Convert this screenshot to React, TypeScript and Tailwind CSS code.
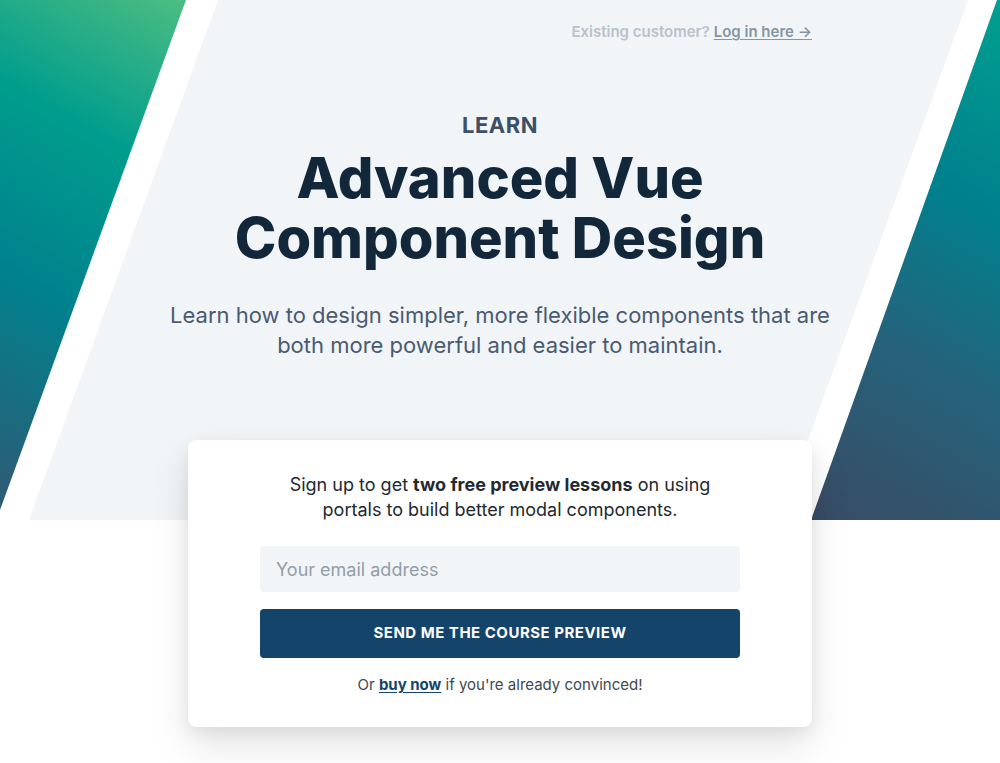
export default function App() {
  return (
    <div className="relative min-h-[763px] bg-white font-['Inter',sans-serif] overflow-hidden">
      {/* background shapes */}
      <div className="absolute top-0 left-0 w-[186px] h-[510px] [clip-path:polygon(0_0,100%_0,0_100%)] bg-[linear-gradient(30deg,#2f5a74_0%,#00828e_40%,#009d8d_70%,#4dbd82_100%)]" />
      <div className="absolute top-0 left-[29px] w-[939px] h-[520px] bg-[#f1f5f8] [clip-path:polygon(189px_0,100%_0,750px_100%,0_100%)]" />
      <div className="absolute top-0 right-0 w-[189px] h-[520px] [clip-path:polygon(186px_0,100%_0,100%_100%,0_100%)] bg-[linear-gradient(30deg,#3a4b64_0%,#26627b_35%,#00808d_65%,#00a08f_100%)]" />

      <div className="relative mx-auto w-[624px] pt-[22px]">
        {/* top link */}
        <div className="flex justify-end text-[15px] leading-[20px] font-semibold">
          <span className="text-[#b8c2cc]">Existing customer?</span>
          <a href="#" className="ml-1 text-[#8795a1] underline underline-offset-2">
            Log in here →
          </a>
        </div>

        {/* hero */}
        <div className="mt-[69px] text-center">
          <p className="text-[22px] leading-[28px] font-bold tracking-wide text-[#3d4f66]">LEARN</p>
          <h1 className="mt-[9px] text-[56px] leading-[60px] font-extrabold text-[#12283a]">
            <span className="block">Advanced Vue</span>
            <span className="block">Component Design</span>
          </h1>
          <p className="mt-[32px] mx-[-40px] text-[22px] leading-[30px] text-[#4a5a70]">
            Learn how to design simpler, more flexible components that are
            <br />
            both more powerful and easier to maintain.
          </p>
        </div>

        {/* signup card */}
        <div className="mt-[80px] rounded-lg bg-white px-[72px] pt-[32px] pb-[31px] shadow-[0_18px_40px_0_rgba(0,0,0,0.11),0_5px_15px_0_rgba(0,0,0,0.07)]">
          <p className="text-center text-[18px] leading-[25px] text-[#22292f]">
            Sign up to get <strong className="font-bold">two free preview lessons</strong> on using
            <br />
            portals to build better modal components.
          </p>
          <input
            type="email"
            placeholder="Your email address"
            className="mt-[24px] block w-full h-[46px] rounded bg-[#f1f5f8] px-4 text-[18px] text-[#22292f] placeholder:text-[#939da8] outline-none"
          />
          <button className="mt-[17px] block w-full h-[49px] rounded bg-[#15446b] text-[15px] font-bold tracking-[0.5px] text-white">
            SEND ME THE COURSE PREVIEW
          </button>
          <p className="mt-[16px] text-center text-[15px] leading-[22px] text-[#3d4852]">
            Or{' '}
            <a href="#" className="font-bold text-[#15446b] underline underline-offset-2">
              buy now
            </a>{' '}
            if you're already convinced!
          </p>
        </div>
      </div>
    </div>
  );
}
